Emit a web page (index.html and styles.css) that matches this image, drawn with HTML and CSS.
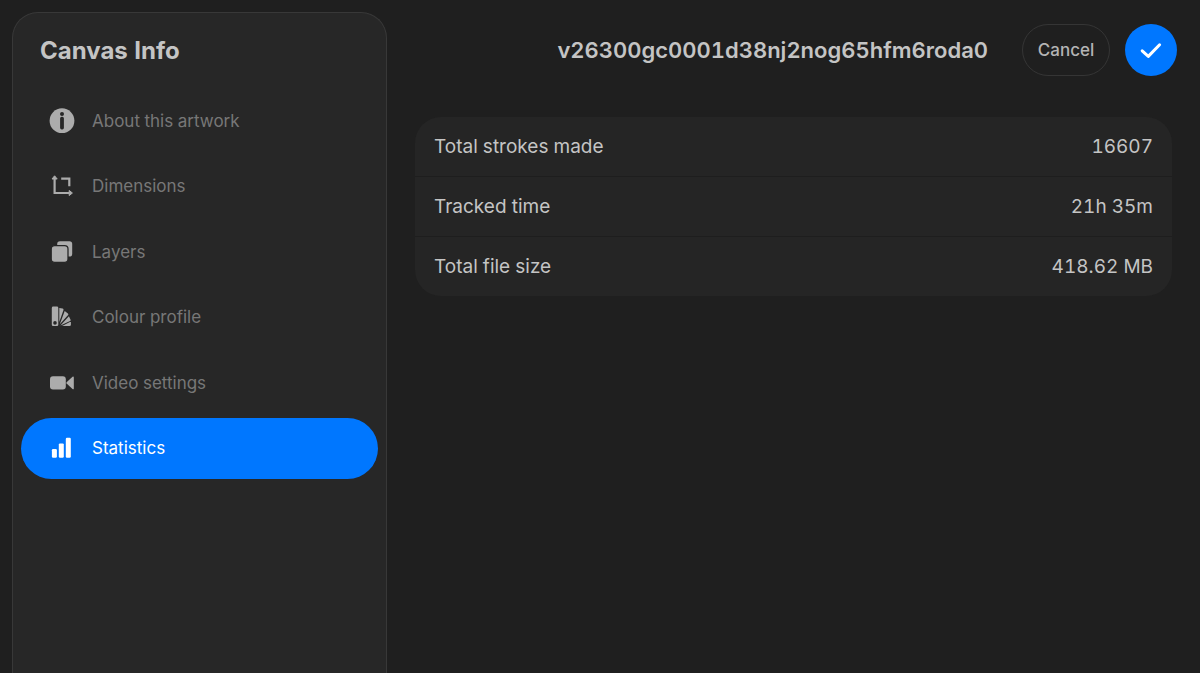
FILE: index.html
```
<!DOCTYPE html>
<html lang="en">
<head>
<meta charset="utf-8">
<meta name="viewport" content="width=device-width, initial-scale=1">
<title>Canvas Info</title>
<link rel="stylesheet" href="styles.css">
</head>
<body>
<div class="layout">
  <aside class="sidebar">
    <h1 class="sidebar-title">Canvas Info</h1>
    <nav class="menu">
      <a class="menu-item" href="#about">
        <svg class="icon" viewBox="0 0 26 26" aria-hidden="true"><circle cx="13" cy="12.7" r="12.4" fill="currentColor"/><circle cx="13" cy="6" r="2" fill="#272727"/><rect x="11.1" y="8.8" width="3.8" height="12.6" rx="1.6" fill="#272727"/></svg>
        About this artwork
      </a>
      <a class="menu-item" href="#dimensions">
        <svg class="icon" viewBox="0 0 26 26" fill="none" stroke="currentColor" stroke-width="2.2" aria-hidden="true"><path d="M5.6 5V20H20M12.2 5.6H20.3V13.2"/><path d="M5.6 2.8 8.2 6H3ZM23.4 20 20.2 22.6V17.4Z" fill="currentColor" stroke-width="1" stroke-linejoin="round"/></svg>
        Dimensions
      </a>
      <a class="menu-item" href="#layers">
        <svg class="icon" viewBox="0 0 26 26" fill="currentColor" aria-hidden="true"><rect x="8.2" y="2.2" width="15" height="15.4" rx="2.8"/><rect x="2.2" y="6.6" width="16.8" height="16.8" rx="3.4" stroke="#272727" stroke-width="1.3"/></svg>
        Layers
      </a>
      <a class="menu-item" href="#colour">
        <svg class="icon" viewBox="0 0 26 26" fill="currentColor" aria-hidden="true"><path fill-rule="evenodd" d="M3.8 2.6H7.9Q9.3 2.6 9.3 4V20.7Q9.3 22.1 7.9 22.1H4.2Q2.8 22.1 2.8 20.7V4Q2.8 2.6 4.2 2.6ZM6 17.1A1.8 1.8 0 1 0 6 20.7A1.8 1.8 0 1 0 6 17.1Z"/><path d="M10.3 3.9 13.6 4.6Q14.8 4.9 14.5 6.1L10.3 17.9ZM15.7 7 18.9 9.4Q19.8 10.1 19.1 11.1L10.8 20.2ZM19.9 12.2 21.6 15.7Q22 16.6 21.1 17L11.4 21.4ZM13.6 21.8 20.9 18.1H21.9V20.7Q21.9 22.1 20.5 22.1H12.6Z"/></svg>
        Colour profile
      </a>
      <a class="menu-item" href="#video">
        <svg class="icon" viewBox="0 0 26 26" fill="currentColor" aria-hidden="true"><rect x="1" y="6.2" width="15.8" height="13.4" rx="3"/><path d="M17.6 12.2 23.5 6.7Q24.8 6 24.8 7.4V18.4Q24.8 19.8 23.5 19.1L17.6 13.6Q17 12.9 17.6 12.2Z"/></svg>
        Video settings
      </a>
      <a class="menu-item active" href="#statistics" aria-current="page">
        <svg class="icon" viewBox="0 0 26 26" fill="currentColor" aria-hidden="true"><rect x="2.9" y="14" width="5" height="8.7" rx="1.2"/><rect x="9.8" y="8.4" width="5" height="14.3" rx="1.2"/><rect x="16.8" y="2.8" width="5" height="19.9" rx="1.2"/></svg>
        Statistics
      </a>
    </nav>
  </aside>
  <main class="content">
    <header class="toolbar">
      <h2 class="artwork-name">v26300gc0001d38nj2nog65hfm6roda0</h2>
      <button class="cancel" type="button">Cancel</button>
      <button class="confirm" type="button" aria-label="Done">
        <svg class="check" viewBox="0 0 24 24" fill="none" stroke="currentColor" stroke-width="3" stroke-linecap="round" stroke-linejoin="round" aria-hidden="true"><path d="M3.2 12.8 9.3 18.4 20.6 6.8"/></svg>
      </button>
    </header>
    <dl class="stats">
      <div class="stat"><dt>Total strokes made</dt><dd>16607</dd></div>
      <div class="stat"><dt>Tracked time</dt><dd>21h 35m</dd></div>
      <div class="stat"><dt>Total file size</dt><dd>418.62 MB</dd></div>
    </dl>
  </main>
</div>
</body>
</html>
```
FILE: styles.css
```
* { box-sizing: border-box; }
body {
  margin: 0;
  background: #1f1f1f;
  color: #c4c4c4;
  font-family: Inter, "Liberation Sans", sans-serif;
  font-variant-numeric: tabular-nums;
}
.layout {
  display: flex;
  min-height: 100vh;
  padding: 12px 0 0 12px;
}
.sidebar {
  flex: 0 0 375px;
  padding: 20px 8px;
  background: #272727;
  border: 1px solid #383838;
  border-bottom: 0;
  border-radius: 26px 26px 0 0;
}
.sidebar-title {
  margin: 0;
  padding-left: 19px;
  font-size: 24px;
  line-height: 36px;
  font-weight: 700;
}
.menu {
  display: flex;
  flex-direction: column;
  justify-content: space-between;
  min-height: 389px;
  margin-top: 21px;
}
.menu-item {
  display: flex;
  align-items: center;
  gap: 17px;
  height: 61px;
  padding-left: 28px;
  border-radius: 31px;
  color: #777777;
  font-size: 17px;
  text-decoration: none;
}
.icon {
  width: 26px;
  height: 26px;
  color: #acacac;
}
.active { background: #0077ff; color: #ffffff; }
.active .icon { color: #ffffff; }
.content {
  flex: 1;
  min-width: 0;
  padding: 12px 28px 0;
}
.toolbar {
  display: flex;
  align-items: center;
  justify-content: flex-end;
  margin-right: -5px;
}
.artwork-name {
  margin: 0 34px 0 0;
  font-size: 22px;
  line-height: 32px;
  font-weight: 600;
}
.cancel {
  width: 88px;
  height: 52px;
  margin-right: 15px;
  padding: 0;
  border: 1px solid #353535;
  border-radius: 26px;
  background: transparent;
  color: #b4b4b4;
  font: 500 17px Inter, "Liberation Sans", sans-serif;
}
.confirm {
  display: grid;
  place-items: center;
  width: 52px;
  height: 52px;
  padding: 0;
  border: 0;
  border-radius: 50%;
  background: #0077ff;
  color: #ffffff;
}
.check { width: 24px; height: 24px; }
.stats {
  margin: 41px 0 0;
  border-radius: 26px;
  background: #252525;
}
.stat {
  display: flex;
  align-items: center;
  justify-content: space-between;
  height: 59px;
  padding: 0 19px;
  font-size: 19px;
}
.stat + .stat { height: 60px; border-top: 1px solid #1e1e1e; }
.stat dd { margin: 0; }
```
